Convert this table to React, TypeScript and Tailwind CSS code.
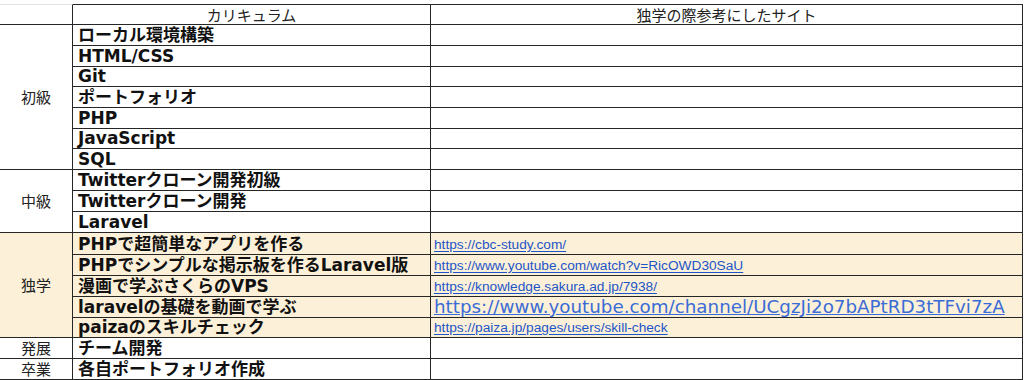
import React from "react";

type Item = { title: string; url?: string; big?: boolean; h: string };
type Group = { label: string; tint?: boolean; span: string; items: Item[] };

const groups: Group[] = [
  {
    label: "初級",
    span: "row-span-7",
    items: [
      { title: "ローカル環境構築", h: "h-[21px]" },
      { title: "HTML/CSS", h: "h-[21px]" },
      { title: "Git", h: "h-[20px]" },
      { title: "ポートフォリオ", h: "h-[21px]" },
      { title: "PHP", h: "h-[21px]" },
      { title: "JavaScript", h: "h-[20px]" },
      { title: "SQL", h: "h-[21px]" },
    ],
  },
  {
    label: "中級",
    span: "row-span-3",
    items: [
      { title: "Twitterクローン開発初級", h: "h-[21px]" },
      { title: "Twitterクローン開発", h: "h-[21px]" },
      { title: "Laravel", h: "h-[21px]" },
    ],
  },
  {
    label: "独学",
    tint: true,
    span: "row-span-5",
    items: [
      { title: "PHPで超簡単なアプリを作る", url: "https://cbc-study.com/", h: "h-[22px]" },
      {
        title: "PHPでシンプルな掲示板を作るLaravel版",
        url: "https://www.youtube.com/watch?v=RicOWD30SaU",
        h: "h-[21px]",
      },
      { title: "漫画で学ぶさくらのVPS", url: "https://knowledge.sakura.ad.jp/7938/", h: "h-[21px]" },
      {
        title: "laravelの基礎を動画で学ぶ",
        url: "https://www.youtube.com/channel/UCgzJi2o7bAPtRD3tTFvi7zA",
        big: true,
        h: "h-[21px]",
      },
      { title: "paizaのスキルチェック", url: "https://paiza.jp/pages/users/skill-check", h: "h-[20px]" },
    ],
  },
  { label: "発展", span: "row-span-1", items: [{ title: "チーム開発", h: "h-[21px]" }] },
  { label: "卒業", span: "row-span-1", items: [{ title: "各自ポートフォリオ作成", h: "h-[21px]" }] },
];

const line = "border-[#262626]";

export default function App() {
  return (
    <div className="w-[1024px] h-[380px] overflow-hidden bg-white pt-[4px] font-['Noto_Sans_CJK_JP',sans-serif] text-[#222]">
      <div className="grid grid-cols-[73px_358px_592px] w-[1023px]">
        {/* header */}
        <div className="h-[21px] border-t border-b border-r border-t-[#e2e2e2] border-b-[#262626] border-r-[#262626]" />
        <div
          className={`h-[21px] border-t border-b border-r ${line} flex items-end justify-center text-[15px] leading-[19px]`}
        >
          カリキュラム
        </div>
        <div
          className={`h-[21px] border-t border-b border-r ${line} flex items-end justify-center text-[15px] leading-[19px]`}
        >
          独学の際参考にしたサイト
        </div>

        {groups.map((g) => (
          <React.Fragment key={g.label}>
            <div
              className={`${g.span} col-start-1 min-h-0 overflow-hidden border-b border-r ${line} flex items-center justify-center text-[15px] leading-[18px] ${
                g.tint ? "bg-[#fcf0d8]" : ""
              }`}
            >
              {g.label}
            </div>
            {g.items.map((it) => (
              <React.Fragment key={it.title}>
                <div
                  className={`${it.h} col-start-2 border-b border-r ${line} flex items-end pl-[5px] font-['DejaVu_Sans','Noto_Sans_CJK_JP',sans-serif] font-semibold text-[17px] leading-[20px] whitespace-nowrap text-[#111] ${
                    g.tint ? "bg-[#fcf0d8]" : ""
                  }`}
                >
                  {it.title}
                </div>
                <div
                  className={`${it.h} col-start-3 border-b border-r ${line} flex items-end pl-[3px] whitespace-nowrap overflow-hidden ${
                    g.tint ? "bg-[#fcf0d8]" : ""
                  }`}
                >
                  {it.url &&
                    (it.big ? (
                      <a
                        href={it.url}
                        className="font-['DejaVu_Sans',sans-serif] text-[18.3px] leading-[20px] text-[#3a6bd6] underline underline-offset-[1px]"
                      >
                        {it.url}
                      </a>
                    ) : (
                      <a
                        href={it.url}
                        className="font-['Liberation_Sans',Arial,sans-serif] text-[13.7px] leading-[18px] text-[#1d55c8] underline underline-offset-[2px]"
                      >
                        {it.url}
                      </a>
                    ))}
                </div>
              </React.Fragment>
            ))}
          </React.Fragment>
        ))}
      </div>
    </div>
  );
}
